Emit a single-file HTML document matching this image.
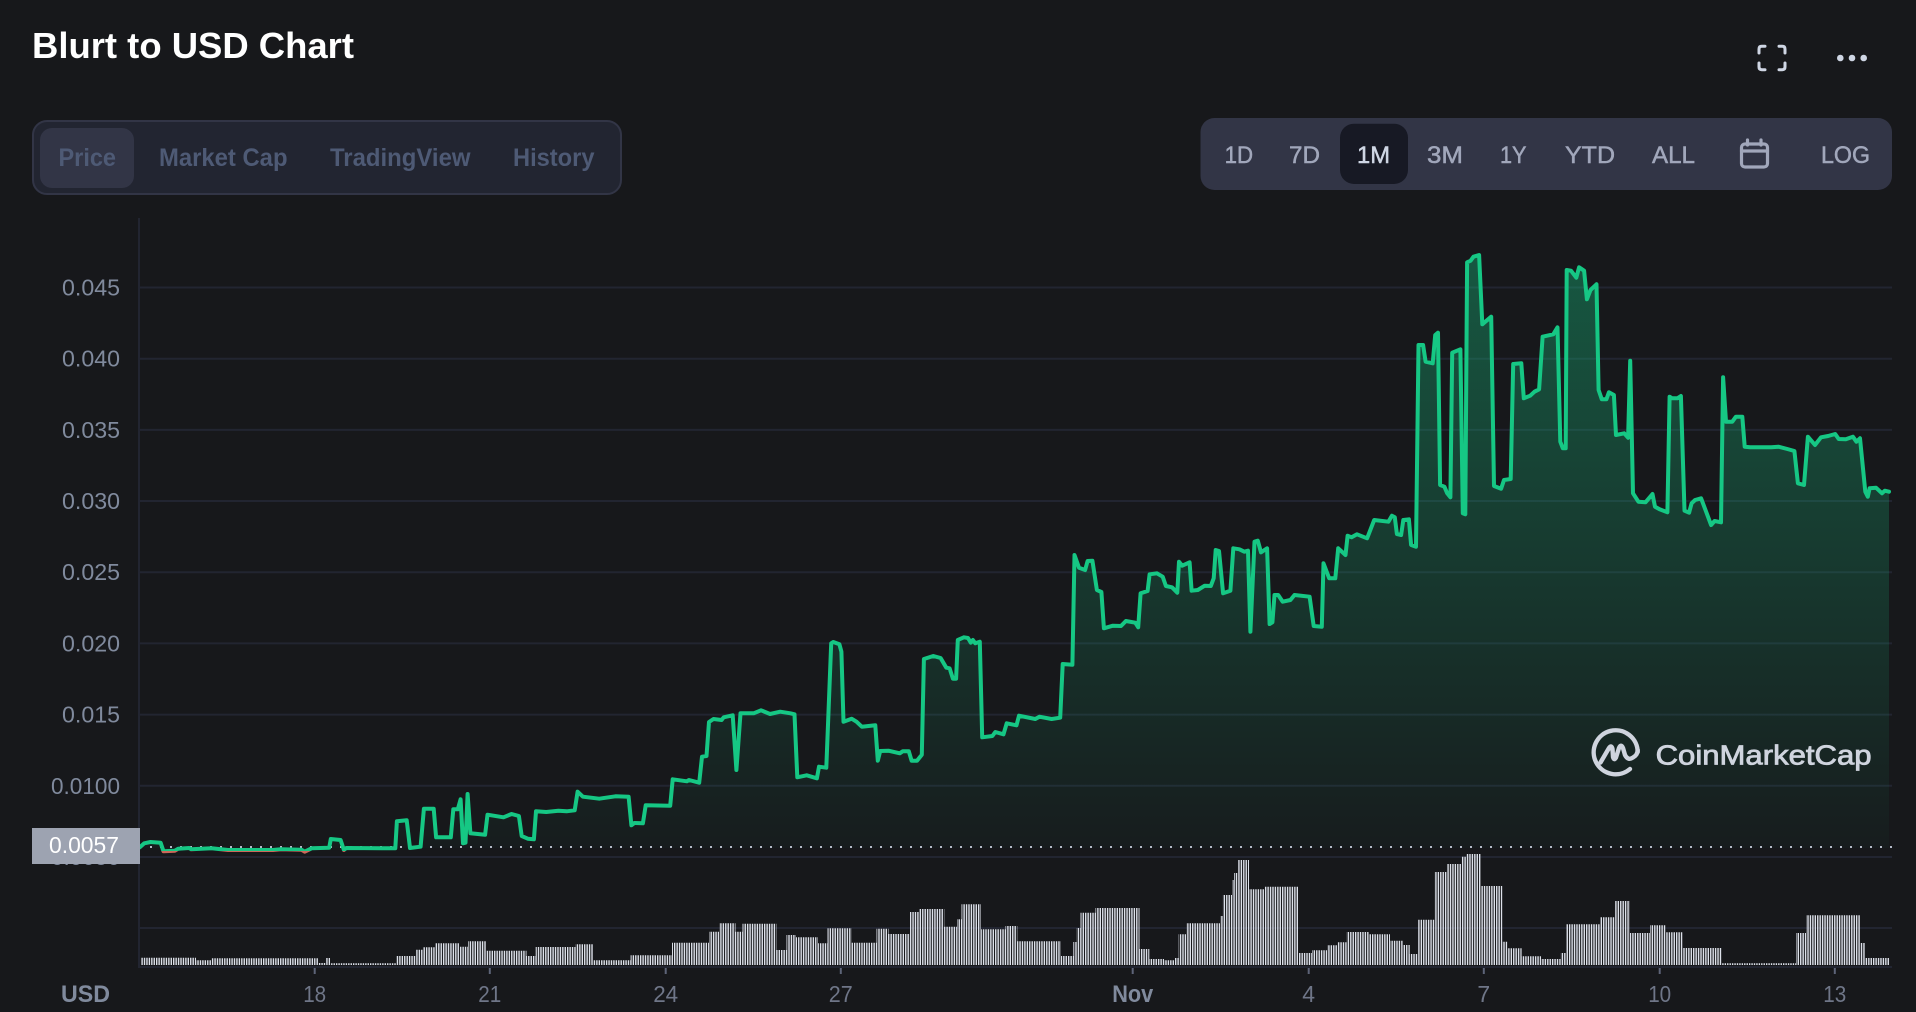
<!DOCTYPE html>
<html lang="en">
<head>
<meta charset="utf-8">
<title>Blurt to USD Chart</title>
<style>
html,body{margin:0;padding:0;width:1916px;height:1012px;overflow:hidden;background:#17181b}
svg{display:block}
text{font-family:"Liberation Sans",Arial,sans-serif}
.yl{font-size:23px;fill:#808a9d;text-anchor:end}
.xl{font-size:23px;fill:#6f7688;text-anchor:middle}
.tab{font-size:25px;font-weight:700;fill:#4e5a75}
.rng{font-size:24.5px;fill:#a1a7bb;stroke:#a1a7bb;stroke-width:.5}
.grid{stroke:#222531;stroke-width:2}
.tick{stroke:#5d6478;stroke-width:2}
</style>
</head>
<body>
<svg width="1916" height="1012" viewBox="0 0 1916 1012" xmlns="http://www.w3.org/2000/svg">
<defs>
<linearGradient id="af" gradientUnits="userSpaceOnUse" x1="0" y1="250" x2="0" y2="890">
<stop offset="0" stop-color="#16c784" stop-opacity=".37"/>
<stop offset="1" stop-color="#16c784" stop-opacity="0"/>
</linearGradient>
<linearGradient id="ls" gradientUnits="userSpaceOnUse" x1="0" y1="200" x2="0" y2="900">
<stop offset=".93" stop-color="#16c784"/>
<stop offset=".93" stop-color="#c9695a"/>
</linearGradient>
<clipPath id="vol">
<path d="M141 965V957.7H196V960.3H211V958.3H318V963H326V958H330V963.3H396.5V956H416V949.7H423V947.3H435.5V943.3H459.5V946.7H468V941.3H486.5V950.7H526.5V956H535.7V947H575.5V944.3H593.5V960.3H630.6V955.3H672V942.7H709V931.7H719V923.3H735.5V931.7H742.5V923.7H776.5V950H786.5V935H796V937.3H818V943.3H827.5V928.3H851.7V942.7H876.5V928.7H888.5V934H910V912H919.5V909H944.3V926.7H957V919.3H961.5V904.3H981V929.3H1005.5V926H1017.3V941.3H1061V956H1073.3V942H1076.5V928H1080.5V912.7H1095.5V908H1139.5V949H1149.3V959H1164V960.3H1174V958H1178.5V934.3H1186V923.3H1220V916H1222.8V895H1232V880H1234V873H1237.5V860H1249V889.3H1264.5V886.7H1298V953H1312V950.3H1327V945.3H1337.5V942.3H1346.5V932H1368.5V934.3H1390V940.7H1402.8V945H1409.8V954H1417.5V919.7H1434.3V872H1446.7V864H1461V856.7H1466.5V854H1480.5V886H1502.3V941.7H1507.3V948.3H1521.7V956.3H1541V959H1560.7V953H1566V924.3H1600V917.3H1614.5V901H1630V933H1650V925.3H1665.5V932.3H1683V948H1722V963.3H1796V933H1806V915.3H1860.5V943H1865V958H1889.5V965Z"/>
</clipPath>
</defs>

<rect width="1916" height="1012" fill="#17181b"/>

<!-- header -->
<text x="32" y="58" font-size="36.5" font-weight="700" fill="#fff" textLength="322" lengthAdjust="spacingAndGlyphs">Blurt to USD Chart</text>

<!-- fullscreen icon -->
<g fill="none" stroke="#cfd6e4" stroke-width="3" stroke-linecap="round" stroke-linejoin="round">
<path d="M1759 53V49Q1759 46.3 1761.7 46.3H1765"/>
<path d="M1779 46.3H1782.3Q1785 46.3 1785 49V53"/>
<path d="M1759 63V67Q1759 69.7 1761.7 69.7H1765"/>
<path d="M1779 69.7H1782.3Q1785 69.7 1785 67V63"/>
</g>
<g fill="#cfd6e4"><circle cx="1840.3" cy="58" r="3.3"/><circle cx="1852" cy="58" r="3.3"/><circle cx="1863.7" cy="58" r="3.3"/></g>

<!-- left tabs -->
<rect x="33" y="121" width="588" height="73" rx="14" fill="#222531" stroke="#323546" stroke-width="2"/>
<rect x="40" y="128" width="94" height="60" rx="12" fill="#323546"/>
<text class="tab" x="58.5" y="166" textLength="57.5" lengthAdjust="spacingAndGlyphs">Price</text>
<text class="tab" x="159" y="166" textLength="128.5" lengthAdjust="spacingAndGlyphs">Market Cap</text>
<text class="tab" x="330" y="166" textLength="140.5" lengthAdjust="spacingAndGlyphs">TradingView</text>
<text class="tab" x="513" y="166" textLength="81.5" lengthAdjust="spacingAndGlyphs">History</text>

<!-- range selector -->
<rect x="1200.5" y="118" width="691.5" height="72" rx="14" fill="#323546"/>
<rect x="1340" y="123.7" width="68" height="60.3" rx="14" fill="#171924"/>
<text class="rng" x="1224.6" y="163" textLength="28.5" lengthAdjust="spacingAndGlyphs">1D</text>
<text class="rng" x="1289" y="163" textLength="31" lengthAdjust="spacingAndGlyphs">7D</text>
<text class="rng" x="1357" y="163" textLength="33" lengthAdjust="spacingAndGlyphs" style="fill:#cfd6e4;stroke:#cfd6e4">1M</text>
<text class="rng" x="1427" y="163" textLength="36" lengthAdjust="spacingAndGlyphs">3M</text>
<text class="rng" x="1500" y="163" textLength="26.5" lengthAdjust="spacingAndGlyphs">1Y</text>
<text class="rng" x="1565" y="163" textLength="50" lengthAdjust="spacingAndGlyphs">YTD</text>
<text class="rng" x="1652" y="163" textLength="43" lengthAdjust="spacingAndGlyphs">ALL</text>
<text class="rng" x="1821" y="163" textLength="49" lengthAdjust="spacingAndGlyphs">LOG</text>
<g fill="none" stroke="#a1a7bb" stroke-width="3.2" stroke-linecap="round">
<rect x="1741.5" y="144" width="26" height="23" rx="3.5"/>
<path d="M1741.5 151H1767.5M1747.5 140V145M1761 140V145"/>
</g>

<!-- grid -->
<g class="grid">
<line x1="139" y1="218" x2="139" y2="968"/>
<line x1="139" y1="287.5" x2="1892" y2="287.5"/>
<line x1="139" y1="358.7" x2="1892" y2="358.7"/>
<line x1="139" y1="429.9" x2="1892" y2="429.9"/>
<line x1="139" y1="501" x2="1892" y2="501"/>
<line x1="139" y1="572.2" x2="1892" y2="572.2"/>
<line x1="139" y1="643.4" x2="1892" y2="643.4"/>
<line x1="139" y1="714.6" x2="1892" y2="714.6"/>
<line x1="139" y1="785.8" x2="1892" y2="785.8"/>
<line x1="139" y1="857" x2="1892" y2="857"/>
<line x1="139" y1="928" x2="1892" y2="928"/>
<line x1="138" y1="967" x2="1892" y2="967"/>
</g>

<!-- y labels -->
<text class="yl" x="120" y="295.5" textLength="58" lengthAdjust="spacingAndGlyphs">0.045</text>
<text class="yl" x="120" y="366.7" textLength="58" lengthAdjust="spacingAndGlyphs">0.040</text>
<text class="yl" x="120" y="437.9" textLength="58" lengthAdjust="spacingAndGlyphs">0.035</text>
<text class="yl" x="120" y="509" textLength="58" lengthAdjust="spacingAndGlyphs">0.030</text>
<text class="yl" x="120" y="580.2" textLength="58" lengthAdjust="spacingAndGlyphs">0.025</text>
<text class="yl" x="120" y="651.4" textLength="58" lengthAdjust="spacingAndGlyphs">0.020</text>
<text class="yl" x="120" y="722.6" textLength="58" lengthAdjust="spacingAndGlyphs">0.015</text>
<text class="yl" x="120" y="793.8" textLength="69" lengthAdjust="spacingAndGlyphs">0.0100</text>
<text class="yl" x="120" y="865" textLength="69" lengthAdjust="spacingAndGlyphs">0.0050</text>

<!-- area -->
<path fill="url(#af)" d="M139.8 847.3L144.3 843.3L150.4 842L160.6 842.7L163.5 851.3L174.9 850.7L178.2 848.7L189.2 848L191.2 849.3L211.6 848.3L228 850L272.9 850L281 849.3L301.4 849.7L304.7 851.7L311.6 848.3L329.2 847.7L330.8 839L340.6 840L343.9 850L346.3 848L395.3 848.3L396.9 821.3L406.7 820.3L410 848L420.6 846.7L423.9 808.7L433.7 808.7L436.1 837.3L450.8 837.3L453.3 809.3L457.8 809.3L460.6 799.3L463 843.3L465.5 842.7L467.6 794L470.4 833.3L485.1 834.7L487.5 814.7L503.5 817.3L511.6 814L518.9 816L521.7 836L527.8 838.7L533.9 839.3L536 811.3L546.2 812L558.4 810.7L566.6 811.3L574.7 810.3L577.6 791.7L582.9 796.7L599.2 798.7L615.5 796.3L628.6 796.7L631.4 825.3L634.3 823L642.9 823.3L645.7 805.3L670.2 805.7L672.7 779.3L686.9 781.3L689 780L699.2 782.7L702 756.7L706.5 756L709 722L713.5 719L721.6 720L723.7 717.3L732.7 715.3L736.4 770L740.5 713.3L753.7 713.3L761 710.3L770 714L780.2 711.7L790.4 713.3L794.5 714.3L797.3 777.3L806.7 775.3L816.9 778.3L819 766.7L826.3 767.7L831.2 643.3L833.3 642L839.4 644.3L841.4 651.7L843.5 721.7L851.6 718.7L856.5 721.7L861.8 726.7L875.3 725.3L877.8 760.7L880.2 751L888.4 750.7L899.8 753.3L902.7 751.3L908.8 751.3L911.6 760.7L917 760.7L921.8 754.7L923.9 659L933.3 656L940.6 658L946.3 667.7L949.6 668.3L952.9 678.7L956.1 678.7L957.8 640L963.9 637.3L968 638L970.8 642.7L972.9 640L975.3 643.3L979.8 641.7L982.2 737.3L992.4 736L995.3 732L1003.5 734.3L1006.7 723.3L1016.5 725.3L1019 715.7L1035.3 719L1039.4 716.7L1051.6 719L1060.2 717.7L1062.7 664L1072.4 664.7L1074.5 555L1079 567.7L1085.1 570L1087.6 561L1092.4 560.7L1096.9 590L1101.4 592L1103.9 628.3L1112.9 625.7L1121 626L1125.9 621L1135.3 622.7L1138.2 627.3L1140.6 593.3L1147.6 591L1149.6 574.3L1156.9 573.3L1162.7 576.7L1165.9 586L1172 587.3L1177.3 592.7L1179 561.7L1182.2 565.7L1189.6 562.3L1191.6 590.7L1197.8 590L1204.7 585.7L1210.8 586L1213.7 578.3L1215.7 550L1219 551L1223.1 593.3L1230.4 590.7L1233.3 548.3L1239.4 549.3L1244.3 551.7L1248 550.7L1250.4 631.7L1254.5 541.7L1257.8 540.7L1261 552.3L1267.1 548.3L1269.6 624L1272.4 622.3L1274.5 595L1278.2 595L1282.7 601.7L1290.4 600L1294.5 595L1309.6 596.7L1313.7 626L1321.8 626.7L1323.5 563.3L1329.2 578.3L1335.3 578.3L1338.2 548.3L1345.5 555L1347.6 535.7L1351.6 537.3L1357 534.3L1367.1 538.3L1374.2 520L1388.4 521.7L1391.9 515.7L1394.8 517.3L1396.9 534L1401.1 535L1403.3 520L1408.9 519.3L1411.1 545L1416 546.7L1418.5 345L1423.1 345L1425.6 361.7L1432.7 363.3L1435.2 335L1438 332.7L1440.1 485L1444.4 486.7L1447.2 493.3L1450.4 497.3L1452.2 352.7L1460.4 349.3L1462.8 513.3L1465.3 514.3L1467.1 262.3L1470.6 260.7L1473.5 256.7L1479.1 255L1482.3 324.3L1491.2 316.7L1494 486L1501.1 488.7L1504 480L1510.7 479L1513.2 364L1521.3 363.3L1523.8 398.3L1530.2 395.7L1534.5 391.7L1539.1 389.3L1542.6 336.7L1553.3 334.3L1557.5 327.3L1560.3 441.7L1562.8 448.3L1565.7 448.3L1566.7 270L1571 270.7L1576.3 277.7L1579.1 267.3L1584.1 270.7L1586.9 299.3L1590.5 290L1596.5 284.3L1598.6 390L1601.8 399.3L1606.4 399.3L1608.9 392.3L1613.9 395L1616 435L1624.2 433.3L1628.1 437.7L1630.2 360.7L1633 493.3L1638.4 501.7L1645.5 502.3L1652.5 494L1655 506.7L1659.6 509.3L1667.4 512.3L1669.6 396.7L1672 398.3L1677.4 398.3L1680.9 396L1684.5 510.7L1689.1 512.7L1691.6 503.3L1695.1 500L1701.1 498.3L1711.1 525L1714.6 521L1721 522.3L1723.1 377.3L1726 421.7L1732.3 421.7L1735.9 416.7L1742.3 416.7L1744.7 446.7L1750.1 447.3L1758.9 447.3L1771.3 447.3L1778.4 446.7L1787.3 449L1794.4 451L1797.9 483.3L1804 485L1807.9 436.7L1815 445L1821 437.3L1828.1 436L1835.2 434L1838.7 439L1845.8 439.3L1852.9 436.7L1856.4 441.7L1860 438.3L1865.3 491.7L1867.8 496.7L1869.6 488.3L1876 487.7L1882 493.3L1884.8 490.7L1889 491.7V848H139.8Z"/>

<!-- base price dotted -->
<line x1="150" y1="847" x2="1892" y2="847" stroke="#cfd6e4" stroke-opacity=".85" stroke-width="2" stroke-dasharray="2 8"/>

<!-- line -->
<path fill="none" stroke="url(#ls)" stroke-width="4" stroke-linejoin="round" stroke-linecap="round" d="M139.8 847.3L144.3 843.3L150.4 842L160.6 842.7L163.5 851.3L174.9 850.7L178.2 848.7L189.2 848L191.2 849.3L211.6 848.3L228 850L272.9 850L281 849.3L301.4 849.7L304.7 851.7L311.6 848.3L329.2 847.7L330.8 839L340.6 840L343.9 850L346.3 848L395.3 848.3L396.9 821.3L406.7 820.3L410 848L420.6 846.7L423.9 808.7L433.7 808.7L436.1 837.3L450.8 837.3L453.3 809.3L457.8 809.3L460.6 799.3L463 843.3L465.5 842.7L467.6 794L470.4 833.3L485.1 834.7L487.5 814.7L503.5 817.3L511.6 814L518.9 816L521.7 836L527.8 838.7L533.9 839.3L536 811.3L546.2 812L558.4 810.7L566.6 811.3L574.7 810.3L577.6 791.7L582.9 796.7L599.2 798.7L615.5 796.3L628.6 796.7L631.4 825.3L634.3 823L642.9 823.3L645.7 805.3L670.2 805.7L672.7 779.3L686.9 781.3L689 780L699.2 782.7L702 756.7L706.5 756L709 722L713.5 719L721.6 720L723.7 717.3L732.7 715.3L736.4 770L740.5 713.3L753.7 713.3L761 710.3L770 714L780.2 711.7L790.4 713.3L794.5 714.3L797.3 777.3L806.7 775.3L816.9 778.3L819 766.7L826.3 767.7L831.2 643.3L833.3 642L839.4 644.3L841.4 651.7L843.5 721.7L851.6 718.7L856.5 721.7L861.8 726.7L875.3 725.3L877.8 760.7L880.2 751L888.4 750.7L899.8 753.3L902.7 751.3L908.8 751.3L911.6 760.7L917 760.7L921.8 754.7L923.9 659L933.3 656L940.6 658L946.3 667.7L949.6 668.3L952.9 678.7L956.1 678.7L957.8 640L963.9 637.3L968 638L970.8 642.7L972.9 640L975.3 643.3L979.8 641.7L982.2 737.3L992.4 736L995.3 732L1003.5 734.3L1006.7 723.3L1016.5 725.3L1019 715.7L1035.3 719L1039.4 716.7L1051.6 719L1060.2 717.7L1062.7 664L1072.4 664.7L1074.5 555L1079 567.7L1085.1 570L1087.6 561L1092.4 560.7L1096.9 590L1101.4 592L1103.9 628.3L1112.9 625.7L1121 626L1125.9 621L1135.3 622.7L1138.2 627.3L1140.6 593.3L1147.6 591L1149.6 574.3L1156.9 573.3L1162.7 576.7L1165.9 586L1172 587.3L1177.3 592.7L1179 561.7L1182.2 565.7L1189.6 562.3L1191.6 590.7L1197.8 590L1204.7 585.7L1210.8 586L1213.7 578.3L1215.7 550L1219 551L1223.1 593.3L1230.4 590.7L1233.3 548.3L1239.4 549.3L1244.3 551.7L1248 550.7L1250.4 631.7L1254.5 541.7L1257.8 540.7L1261 552.3L1267.1 548.3L1269.6 624L1272.4 622.3L1274.5 595L1278.2 595L1282.7 601.7L1290.4 600L1294.5 595L1309.6 596.7L1313.7 626L1321.8 626.7L1323.5 563.3L1329.2 578.3L1335.3 578.3L1338.2 548.3L1345.5 555L1347.6 535.7L1351.6 537.3L1357 534.3L1367.1 538.3L1374.2 520L1388.4 521.7L1391.9 515.7L1394.8 517.3L1396.9 534L1401.1 535L1403.3 520L1408.9 519.3L1411.1 545L1416 546.7L1418.5 345L1423.1 345L1425.6 361.7L1432.7 363.3L1435.2 335L1438 332.7L1440.1 485L1444.4 486.7L1447.2 493.3L1450.4 497.3L1452.2 352.7L1460.4 349.3L1462.8 513.3L1465.3 514.3L1467.1 262.3L1470.6 260.7L1473.5 256.7L1479.1 255L1482.3 324.3L1491.2 316.7L1494 486L1501.1 488.7L1504 480L1510.7 479L1513.2 364L1521.3 363.3L1523.8 398.3L1530.2 395.7L1534.5 391.7L1539.1 389.3L1542.6 336.7L1553.3 334.3L1557.5 327.3L1560.3 441.7L1562.8 448.3L1565.7 448.3L1566.7 270L1571 270.7L1576.3 277.7L1579.1 267.3L1584.1 270.7L1586.9 299.3L1590.5 290L1596.5 284.3L1598.6 390L1601.8 399.3L1606.4 399.3L1608.9 392.3L1613.9 395L1616 435L1624.2 433.3L1628.1 437.7L1630.2 360.7L1633 493.3L1638.4 501.7L1645.5 502.3L1652.5 494L1655 506.7L1659.6 509.3L1667.4 512.3L1669.6 396.7L1672 398.3L1677.4 398.3L1680.9 396L1684.5 510.7L1689.1 512.7L1691.6 503.3L1695.1 500L1701.1 498.3L1711.1 525L1714.6 521L1721 522.3L1723.1 377.3L1726 421.7L1732.3 421.7L1735.9 416.7L1742.3 416.7L1744.7 446.7L1750.1 447.3L1758.9 447.3L1771.3 447.3L1778.4 446.7L1787.3 449L1794.4 451L1797.9 483.3L1804 485L1807.9 436.7L1815 445L1821 437.3L1828.1 436L1835.2 434L1838.7 439L1845.8 439.3L1852.9 436.7L1856.4 441.7L1860 438.3L1865.3 491.7L1867.8 496.7L1869.6 488.3L1876 487.7L1882 493.3L1884.8 490.7L1889 491.7"/>

<!-- volume -->
<g clip-path="url(#vol)">
<line x1="141.4" y1="910" x2="1890" y2="910" stroke="#dde1ea" stroke-width="112" stroke-dasharray="1.4 1.032"/>
</g>

<!-- current price label -->
<rect x="32" y="828" width="108" height="36" fill="#9da3b1"/>
<text x="119" y="853" font-size="23" fill="#fff" text-anchor="end" textLength="70" lengthAdjust="spacingAndGlyphs">0.0057</text>

<!-- x axis -->
<g class="tick">
<line x1="314.7" y1="968" x2="314.7" y2="974"/>
<line x1="489.8" y1="968" x2="489.8" y2="974"/>
<line x1="665.7" y1="968" x2="665.7" y2="974"/>
<line x1="840.8" y1="968" x2="840.8" y2="974"/>
<line x1="1132.7" y1="968" x2="1132.7" y2="974"/>
<line x1="1308.7" y1="968" x2="1308.7" y2="974"/>
<line x1="1483.8" y1="968" x2="1483.8" y2="974"/>
<line x1="1659.7" y1="968" x2="1659.7" y2="974"/>
<line x1="1834.8" y1="968" x2="1834.8" y2="974"/>
</g>
<text x="61" y="1002" font-size="24" font-weight="700" fill="#808a9d" textLength="49" lengthAdjust="spacingAndGlyphs">USD</text>
<text class="xl" x="314.7" y="1002" textLength="23" lengthAdjust="spacingAndGlyphs">18</text>
<text class="xl" x="489.8" y="1002" textLength="23" lengthAdjust="spacingAndGlyphs">21</text>
<text class="xl" x="665.7" y="1002" textLength="25" lengthAdjust="spacingAndGlyphs">24</text>
<text class="xl" x="840.8" y="1002" textLength="24" lengthAdjust="spacingAndGlyphs">27</text>
<text x="1132.7" y="1002" font-size="24" font-weight="700" fill="#808a9d" text-anchor="middle" textLength="41" lengthAdjust="spacingAndGlyphs">Nov</text>
<text class="xl" x="1308.7" y="1002">4</text>
<text class="xl" x="1483.8" y="1002">7</text>
<text class="xl" x="1659.7" y="1002" textLength="23" lengthAdjust="spacingAndGlyphs">10</text>
<text class="xl" x="1834.8" y="1002" textLength="23" lengthAdjust="spacingAndGlyphs">13</text>

<!-- watermark logo -->
<g fill="none" stroke="#cfd4de" stroke-width="4.4" stroke-linecap="round" stroke-linejoin="round">
<path d="M1637.7 752A22 22 0 1 0 1630 769"/>
<path d="M1600.5 762.5L1609 748Q1611.5 744.5 1612.5 749L1613 757Q1614 761 1616 757.5L1619 748Q1621 743.5 1623 748L1625 755Q1628 761 1633 757.5Q1637.6 755 1637.7 750"/>
</g>
<text x="1655.6" y="764.3" font-size="28" fill="#cfd4de" stroke="#cfd4de" stroke-width=".8" textLength="216" lengthAdjust="spacingAndGlyphs">CoinMarketCap</text>
</svg>
</body>
</html>
